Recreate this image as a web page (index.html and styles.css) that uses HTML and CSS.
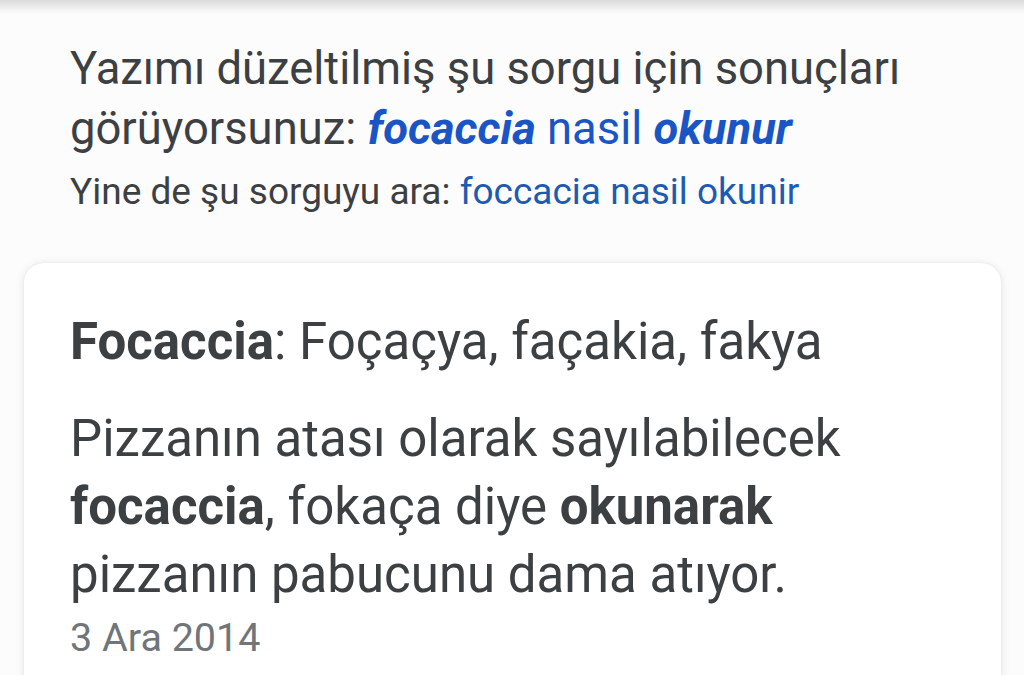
FILE: index.html
```html
<!DOCTYPE html>
<html lang="tr">
<head>
<meta charset="utf-8">
<link rel="stylesheet" href="styles.css">
</head>
<body>
<div class="topbar"></div>
<main class="page">
  <section class="spell">
    <p class="showing">Yazımı düzeltilmiş şu sorgu için sonuçları görüyorsunuz: <a class="fix"><b><i>focaccia</i></b> nasil <b><i>okunur</i></b></a></p>
    <p class="instead">Yine de şu sorguyu ara: <a class="orig">foccacia nasil okunir</a></p>
  </section>
  <article class="card">
    <h2 class="title"><b>Focaccia</b>: Foçaçya, façakia, fakya</h2>
    <p class="snippet">Pizzanın atası olarak sayılabilecek <b>focaccia</b>, fokaça diye <b>okunarak</b> pizzanın pabucunu dama atıyor.</p>
    <p class="date">3 Ara 2014</p>
  </article>
</main>
</body>
</html>
```
FILE: styles.css
```css
html, body {
  margin: 0;
  padding: 0;
  background: #fcfcfc;
  font-family: Roboto, "Noto Sans", sans-serif;
  color: #3c4043;
  overflow: hidden;
  height: 675px;
}
.topbar {
  height: 14px;
  background: linear-gradient(#dadada, #f3f3f3 70%, #fbfbfb);
}
.page {
  padding: 0 0 0 24px;
}
.spell {
  padding: 25px 0 0 46px;
}
.showing {
  margin: 0;
  font-size: 45.4px;
  line-height: 60px;
  width: 900px;
}
.fix {
  color: #1a55c6;
}
.fix b { font-weight: 700; }
.instead {
  margin: 9px 0 0;
  font-size: 37px;
  line-height: 48px;
}
.orig {
  color: #1d5bb3;
}
.card {
  margin-top: 47px;
  width: 977px;
  background: #fff;
  border-radius: 20px;
  box-shadow: 0 1px 10px rgba(0,0,0,0.10), 0 0 3px rgba(0,0,0,0.05);
  padding: 49px 46px 40px;
  box-sizing: border-box;
  min-height: 440px;
}
.title {
  margin: 0;
  font-size: 51px;
  line-height: 60px;
  font-weight: 400;
}
.title b { font-weight: 700; }
.snippet {
  margin: 33px 0 0;
  font-size: 51px;
  line-height: 68px;
  width: 860px;
}
.snippet b { font-weight: 700; }
.date {
  margin: 4px 0 0;
  font-size: 39.5px;
  line-height: 50px;
  color: #70757a;
}
```
